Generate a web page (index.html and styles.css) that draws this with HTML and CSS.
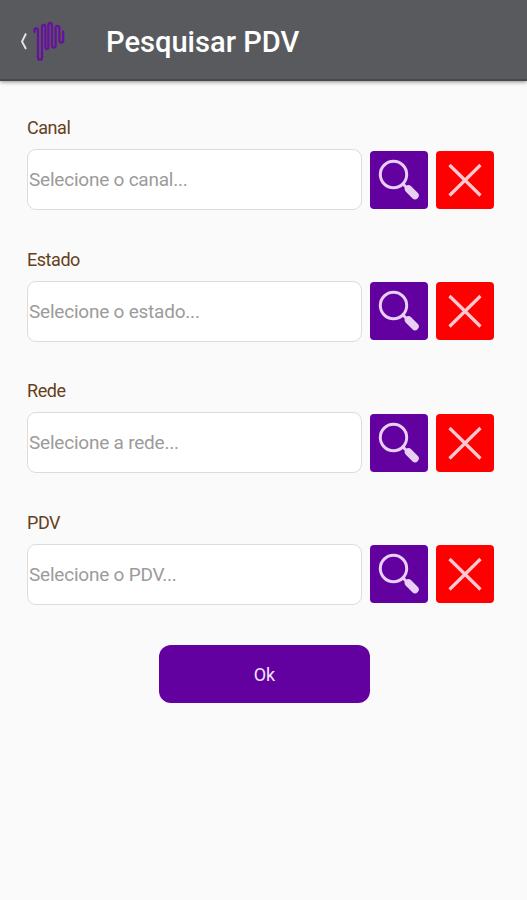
FILE: index.html
```html
<!DOCTYPE html>
<html lang="pt-BR">
<head>
<meta charset="utf-8">
<title>Pesquisar PDV</title>
<link rel="stylesheet" href="styles.css">
</head>
<body>
<svg class="sprite" aria-hidden="true">
  <symbol id="search" viewBox="0 0 58 58">
    <circle cx="23.500" cy="23.500" r="13.200" fill="none" stroke="#e8cff5" stroke-width="3"/>
    <path d="M33 33L38 38" stroke="#e8cff5" stroke-width="3"/>
    <path d="M38.500 38L45 44.500" stroke="#e8cff5" stroke-width="7.500" stroke-linecap="round"/>
  </symbol>
  <symbol id="clear" viewBox="0 0 58 58">
    <path d="M13.500 14L44.500 44.500M44.500 14L13.500 44.500" fill="none" stroke="#ffc9d2" stroke-width="3.200"/>
  </symbol>
</svg>
<header class="bar">
  <svg class="back" viewBox="0 0 8 18"><path d="M6 1.500L2 9.500L6 17" fill="none" stroke="#e4e4e6" stroke-width="1.900"/></svg>
  <svg class="logo" viewBox="0 0 32 40"><path d="M1.500 11V9Q1.500 7.300 3.200 7.300T5 9V36.500Q5 38.700 7 38.700T9 36.500V6Q9 4 10.700 4T12.400 6V26Q12.400 28 13.900 28T15.400 26V4Q15.400 2 17.200 2T19 4V24.500Q19 26.500 20.800 26.500T22.600 24.500V7Q22.600 4.800 24.500 4.800T26.400 7V19.500Q26.400 21.500 28.300 21.500T30.200 19.500V10.500" fill="none" stroke="#66129c" stroke-width="2.300" stroke-linecap="round"/></svg>
  <h1 class="title">Pesquisar PDV</h1>
</header>
<main class="form">
  <section class="field">
    <label class="label" for="canal">Canal</label>
    <div class="row">
      <input class="input" id="canal" placeholder="Selecione o canal...">
      <button class="tool find"><svg><use href="#search"/></svg></button>
      <button class="tool clear"><svg><use href="#clear"/></svg></button>
    </div>
  </section>
  <section class="field">
    <label class="label" for="estado">Estado</label>
    <div class="row">
      <input class="input" id="estado" placeholder="Selecione o estado...">
      <button class="tool find"><svg><use href="#search"/></svg></button>
      <button class="tool clear"><svg><use href="#clear"/></svg></button>
    </div>
  </section>
  <section class="field">
    <label class="label" for="rede">Rede</label>
    <div class="row">
      <input class="input" id="rede" placeholder="Selecione a rede...">
      <button class="tool find"><svg><use href="#search"/></svg></button>
      <button class="tool clear"><svg><use href="#clear"/></svg></button>
    </div>
  </section>
  <section class="field">
    <label class="label" for="pdv">PDV</label>
    <div class="row">
      <input class="input" id="pdv" placeholder="Selecione o PDV...">
      <button class="tool find"><svg><use href="#search"/></svg></button>
      <button class="tool clear"><svg><use href="#clear"/></svg></button>
    </div>
  </section>
  <button class="ok">Ok</button>
</main>
</body>
</html>
```
FILE: styles.css
```css
* { box-sizing: border-box; }
body {
  margin: 0;
  min-height: 900px;
  background: #fafafa;
  font-family: Roboto, sans-serif;
}
.sprite { display: none; }
.bar {
  display: flex;
  align-items: center;
  height: 81px;
  padding: 2px 0 0 20px;
  background: #595a5e;
  border-bottom: 2px solid #48484b;
  box-shadow: 0 1px 4px rgba(0, 0, 0, .45);
}
.back { width: 8px; height: 18px; }
.logo { width: 32px; height: 40px; margin-left: 5px; }
.title {
  margin: 3px 0 0 41px;
  color: #fff;
  font-size: 29.1px;
  font-weight: 500;
  line-height: 36px;
  white-space: nowrap;
}
.form {
  display: flex;
  flex-direction: column;
  padding: 37px 33px 0 27px;
}
.field { height: 131.5px; }
.label {
  display: block;
  height: 31px;
  color: #65401c;
  font-size: 18px;
  letter-spacing: -.45px;
  line-height: 20px;
}
.row {
  display: flex;
  align-items: center;
  gap: 8px;
}
.input {
  flex: 1;
  min-width: 0;
  height: 61px;
  padding: 0 1px;
  border: 1px solid #dcdcdc;
  border-radius: 9px;
  background: #fff;
  font: 19px Roboto, sans-serif;
  letter-spacing: -.22px;
}
.input::placeholder { color: #9b9b9b; opacity: 1; }
.tool {
  width: 58px;
  height: 58px;
  padding: 0;
  border: 0;
  border-radius: 4px;
}
.tool svg { display: block; width: 58px; height: 58px; }
.find { background: #6200a0; }
.clear { background: #f00; }
.ok {
  width: 211px;
  height: 58px;
  margin: 1px 0 0 132px;
  padding: 0;
  border: 0;
  border-radius: 12px;
  background: #6200a0;
  color: #f3e6fa;
  font: 18px Roboto, sans-serif;
}
```
